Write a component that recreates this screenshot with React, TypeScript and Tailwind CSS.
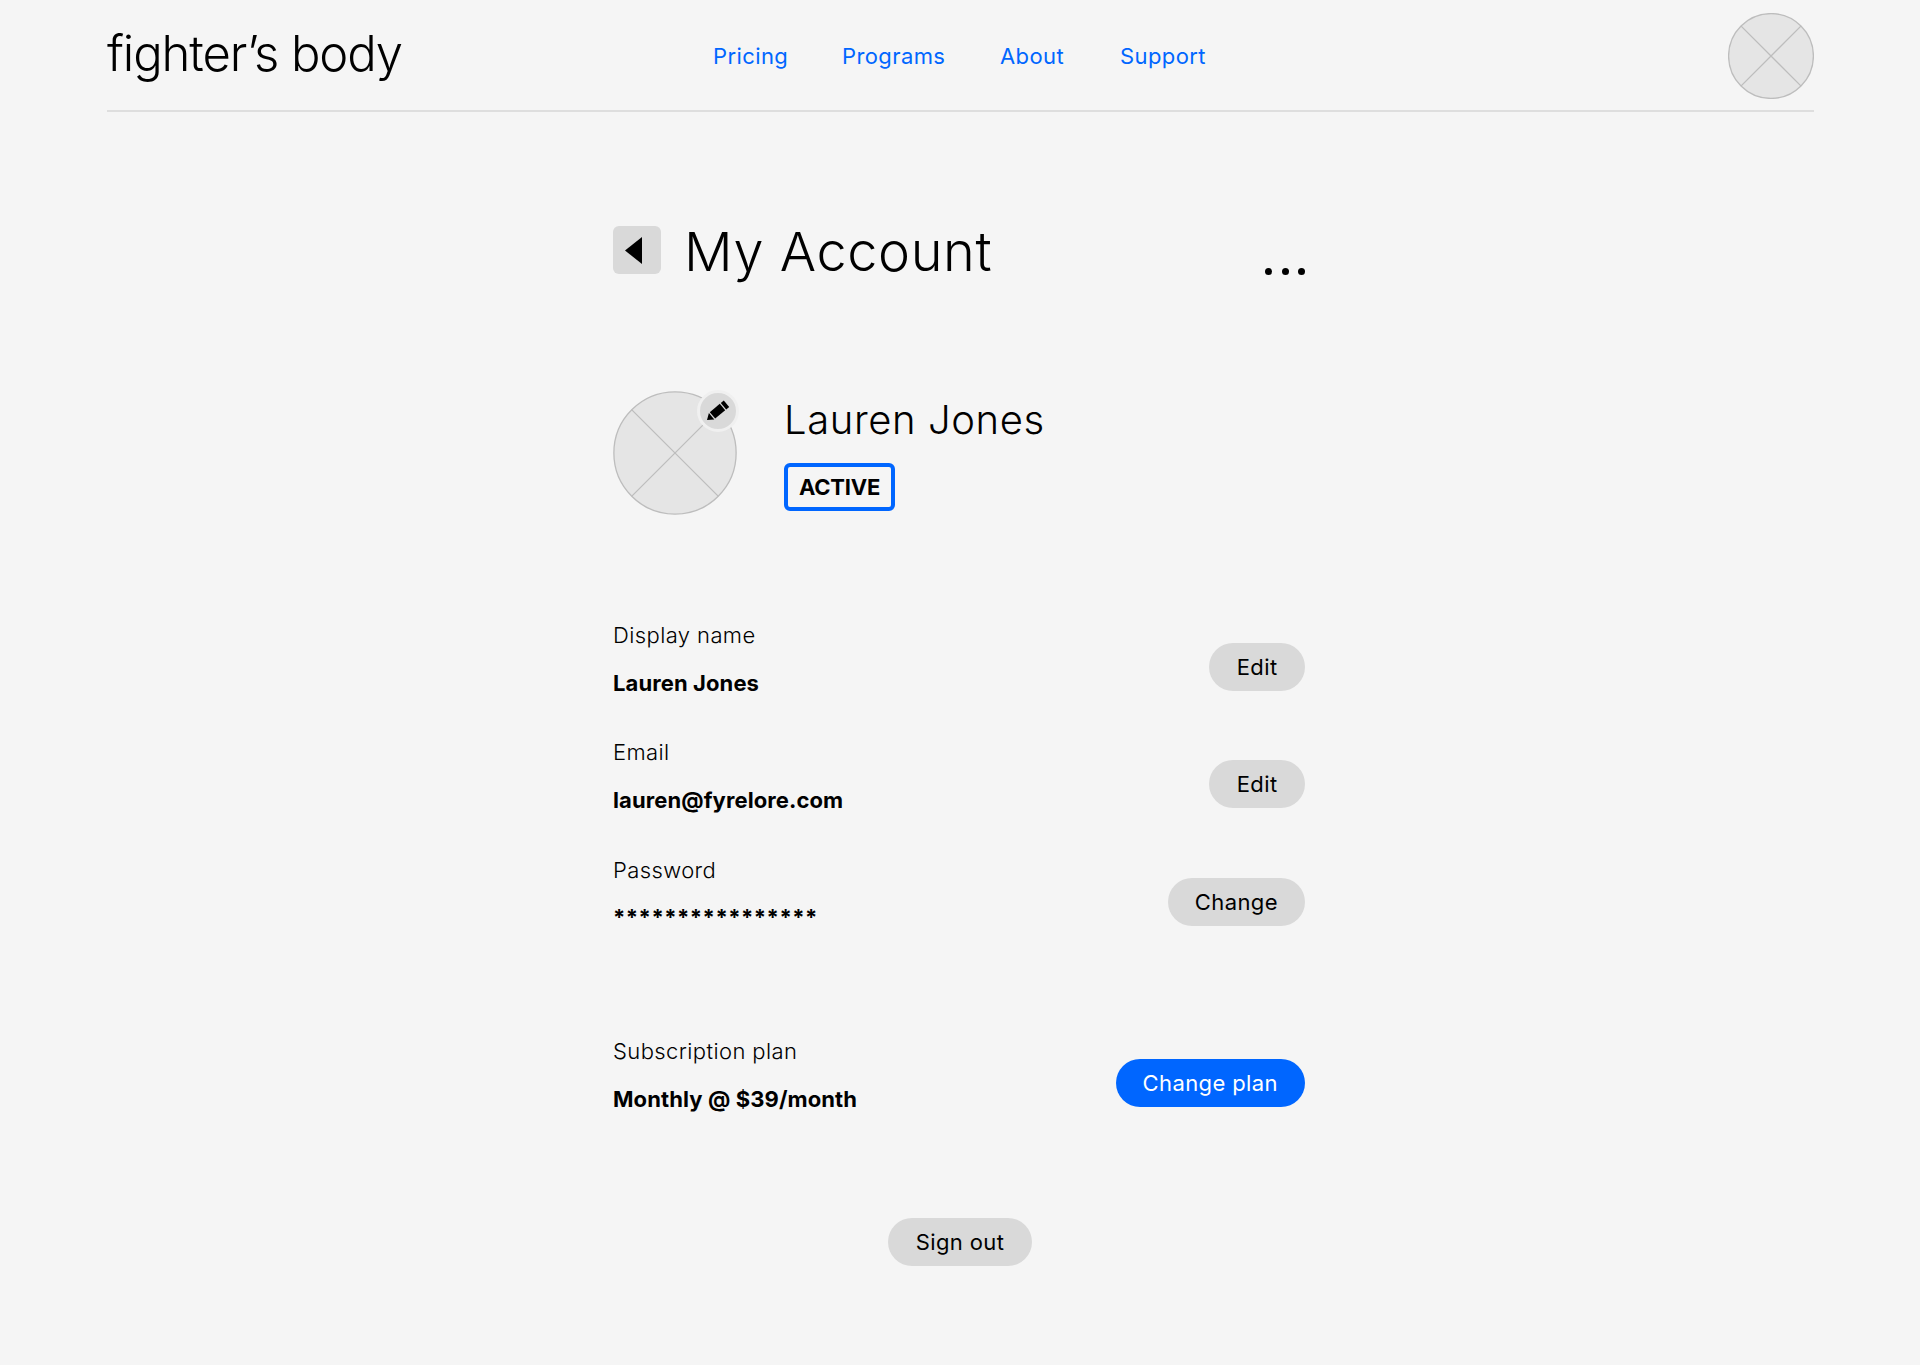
function Placeholder({ className }: { className: string }) {
    return (
        <svg viewBox="0 0 100 100" className={className}>
            <circle cx="50" cy="50" r="49.3" fill="#e5e5e5" stroke="#bdbdbd" strokeWidth="1.3" vectorEffect="non-scaling-stroke" />
            <path d="M15 15 L85 85 M85 15 L15 85" stroke="#bdbdbd" strokeWidth="1.3" vectorEffect="non-scaling-stroke" />
        </svg>
    );
}

function PillButton({ label, primary, padding = 'px-[27px]' }: { label: string; primary?: boolean; padding?: string }) {
    return (
        <button
            type="button"
            className={`h-12 ${padding} rounded-full text-[22px] leading-none tracking-[0.4px] ${
                primary ? 'bg-[#0066ff] text-white' : 'bg-[#d9d9d9] text-black'
            }`}
        >
            {label}
        </button>
    );
}

function Field({ label, value, action, primary, mono, padding }: { label: string; value: string; action: string; primary?: boolean; mono?: boolean; padding?: string }) {
    return (
        <div className="flex items-center justify-between h-[117.5px]">
            <div className="flex flex-col -mt-[2px]">
                <span className="text-[22px] leading-[26px] font-light tracking-[0.4px]">{label}</span>
                <span className={`text-[22px] leading-[26px] font-bold ${mono ? 'mt-[21px] tracking-[0.5px]' : 'mt-[22px] tracking-[0.1px]'}`}>{value}</span>
            </div>
            <div className="mt-[14px]">
                <PillButton label={action} primary={primary} padding={padding} />
            </div>
        </div>
    );
}

export default function App() {
    return (
        <div className="min-h-[1365px] bg-[#f5f5f5] text-black font-['Inter',sans-serif]">
            <header className="mx-[106px] ml-[107px] h-[112px] border-b-2 border-[#dedede] flex items-center">
                <span className="w-[606px] text-[49px] font-light leading-none tracking-[-1.1px] -mt-[4px]">fighter’s body</span>
                <nav className="flex text-[22px] text-[#0066ff] tracking-[0.4px] mt-[3px]">
                    <a className="w-[129px]">Pricing</a>
                    <a className="w-[158px]">Programs</a>
                    <a className="w-[120px]">About</a>
                    <a>Support</a>
                </nav>
                <Placeholder className="ml-auto w-[86px] h-[86px] mt-[1px]" />
            </header>

            <main className="w-[692px] ml-[613px]">
                <div className="flex items-center mt-[114px] h-12">
                    <button type="button" className="w-12 h-12 rounded-[6px] bg-[#d9d9d9] flex items-center justify-center">
                        <svg viewBox="0 0 17 27" className="w-[17px] h-[27px] -ml-[7px]">
                            <path d="M17 0 V27 L0 13.5 Z" fill="#000" />
                        </svg>
                    </button>
                    <h1 className="ml-[23px] mt-[3px] text-[54px] leading-none font-light tracking-[0.6px]">My Account</h1>
                    <svg viewBox="0 0 40 7" className="ml-auto w-[40px] h-[7px] mt-[42px]">
                        <circle cx="3.5" cy="3.5" r="3.5" fill="#000" />
                        <circle cx="20.5" cy="3.5" r="3.5" fill="#000" />
                        <circle cx="36.5" cy="3.5" r="3.5" fill="#000" />
                    </svg>
                </div>

                <div className="flex mt-[117px]">
                    <div className="relative w-[124px] h-[124px]">
                        <Placeholder className="w-[124px] h-[124px]" />
                        <div className="absolute -right-[2px] -top-[1px] w-[42px] h-[42px] rounded-full bg-[#d9d9d9] border-[3px] border-[#f0f0f0] flex items-center justify-center">
                            <svg viewBox="0 -2 23 20" className="w-[23px] h-[20px] -mt-[3px]">
                                <path d="M0 18 L1.9 11 L7.3 17.4 Z" fill="#000" />
                                <path d="M2.8 10.2 L12.8 1.8 L18.2 8.2 L8.2 16.6 Z" fill="#000" />
                                <path d="M13.8 1 L16.8 -1.5 L22.2 4.9 L19.2 7.4 Z" fill="#000" />
                            </svg>
                        </div>
                    </div>
                    <div className="ml-[47px] flex flex-col items-start">
                        <span className="mt-[5px] text-[40px] leading-[48px] font-light tracking-[0.6px]">Lauren Jones</span>
                        <span className="mt-[19px] h-12 w-[111px] rounded-[6px] border-4 border-[#0066ff] flex items-center justify-center text-[22px] font-bold tracking-[-0.2px]">ACTIVE</span>
                    </div>
                </div>

                <div className="mt-[86px]">
                    <Field label="Display name" value="Lauren Jones" action="Edit" padding="px-[27.5px]" />
                    <Field label="Email" value="lauren@fyrelore.com" action="Edit" padding="px-[27.5px]" />
                    <Field label="Password" value="****************" action="Change" mono />
                </div>

                <div className="mt-[64px]">
                    <Field label="Subscription plan" value="Monthly @ $39/month" action="Change plan" primary />
                </div>

                <div className="flex justify-center mt-[83px] ml-[2px]">
                    <PillButton label="Sign out" padding="px-[28px]" />
                </div>
            </main>
        </div>
    );
}
